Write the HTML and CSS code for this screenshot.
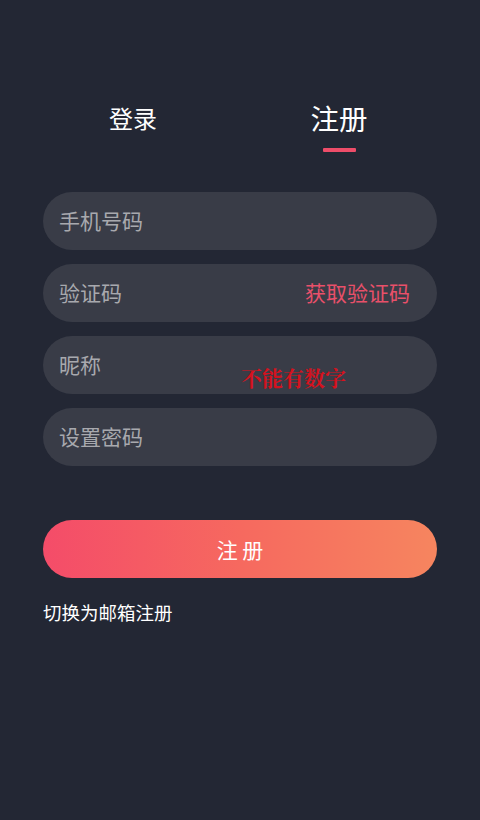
FILE: index.html
```html
<!DOCTYPE html>
<html lang="zh">
<head>
<meta charset="utf-8">
<title>注册</title>
<link rel="stylesheet" href="styles.css">
</head>
<body>
<div class="page">
  <div class="tabs">
    <div class="tab">
      <span class="tab-label">登录</span>
      <span class="tab-bar"></span>
    </div>
    <div class="tab tab-active">
      <span class="tab-label">注册</span>
      <span class="tab-bar"></span>
    </div>
  </div>

  <div class="form">
    <div class="field"><span class="ph">手机号码</span></div>
    <div class="field"><span class="ph">验证码</span><span class="code-btn">获取验证码</span></div>
    <div class="field field-nick"><span class="ph">昵称</span><span class="hint">不能有数字</span></div>
    <div class="field"><span class="ph">设置密码</span></div>
  </div>

  <div class="submit">注 册</div>
  <div class="switch">切换为邮箱注册</div>
</div>
</body>
</html>
```
FILE: styles.css
```css
html, body {
  margin: 0;
  padding: 0;
  background: #232734;
  height: 100%;
}
body {
  font-family: "Noto Sans CJK SC", "Noto Sans", sans-serif;
  color: #ffffff;
}
.page {
  padding: 0 43px;
}
.tabs {
  display: flex;
  margin: 98px -5px 0 -13px;
}
.tab {
  flex: 1;
  display: flex;
  flex-direction: column;
  align-items: center;
}
.tab-label {
  height: 40px;
  line-height: 40px;
  font-size: 24px;
  color: #ffffff;
}
.tab-active .tab-label {
  font-size: 28.5px;
}
.tab-bar {
  width: 33px;
  height: 4px;
  margin-top: 10px;
  border-radius: 1px;
  background: transparent;
}
.tab-active .tab-bar {
  background: #ee4d69;
}
.form {
  display: flex;
  flex-direction: column;
  gap: 14px;
  margin-top: 40px;
}
.field {
  position: relative;
  box-sizing: border-box;
  height: 58px;
  border-radius: 29px;
  background: #393c47;
  display: flex;
  align-items: center;
  justify-content: space-between;
  padding: 0 27px 3px 16px;
  font-size: 21px;
}
.ph {
  color: #a8a9ae;
}
.code-btn {
  color: #e9506a;
}
.hint {
  position: absolute;
  left: 198px;
  top: 31px;
  line-height: 1;
  font-size: 21px;
  font-weight: bold;
  font-family: "Noto Serif CJK SC", "Liberation Serif", serif;
  color: #d4121e;
}
.submit {
  margin-top: 54px;
  height: 58px;
  border-radius: 29px;
  background: linear-gradient(90deg, #f44c69 0%, #f6695f 50%, #f6855f 100%);
  display: flex;
  align-items: center;
  justify-content: center;
  font-size: 21px;
  color: #ffffff;
}
.switch {
  margin-top: 22px;
  line-height: 24px;
  font-size: 18.5px;
  color: #ffffff;
}
```
